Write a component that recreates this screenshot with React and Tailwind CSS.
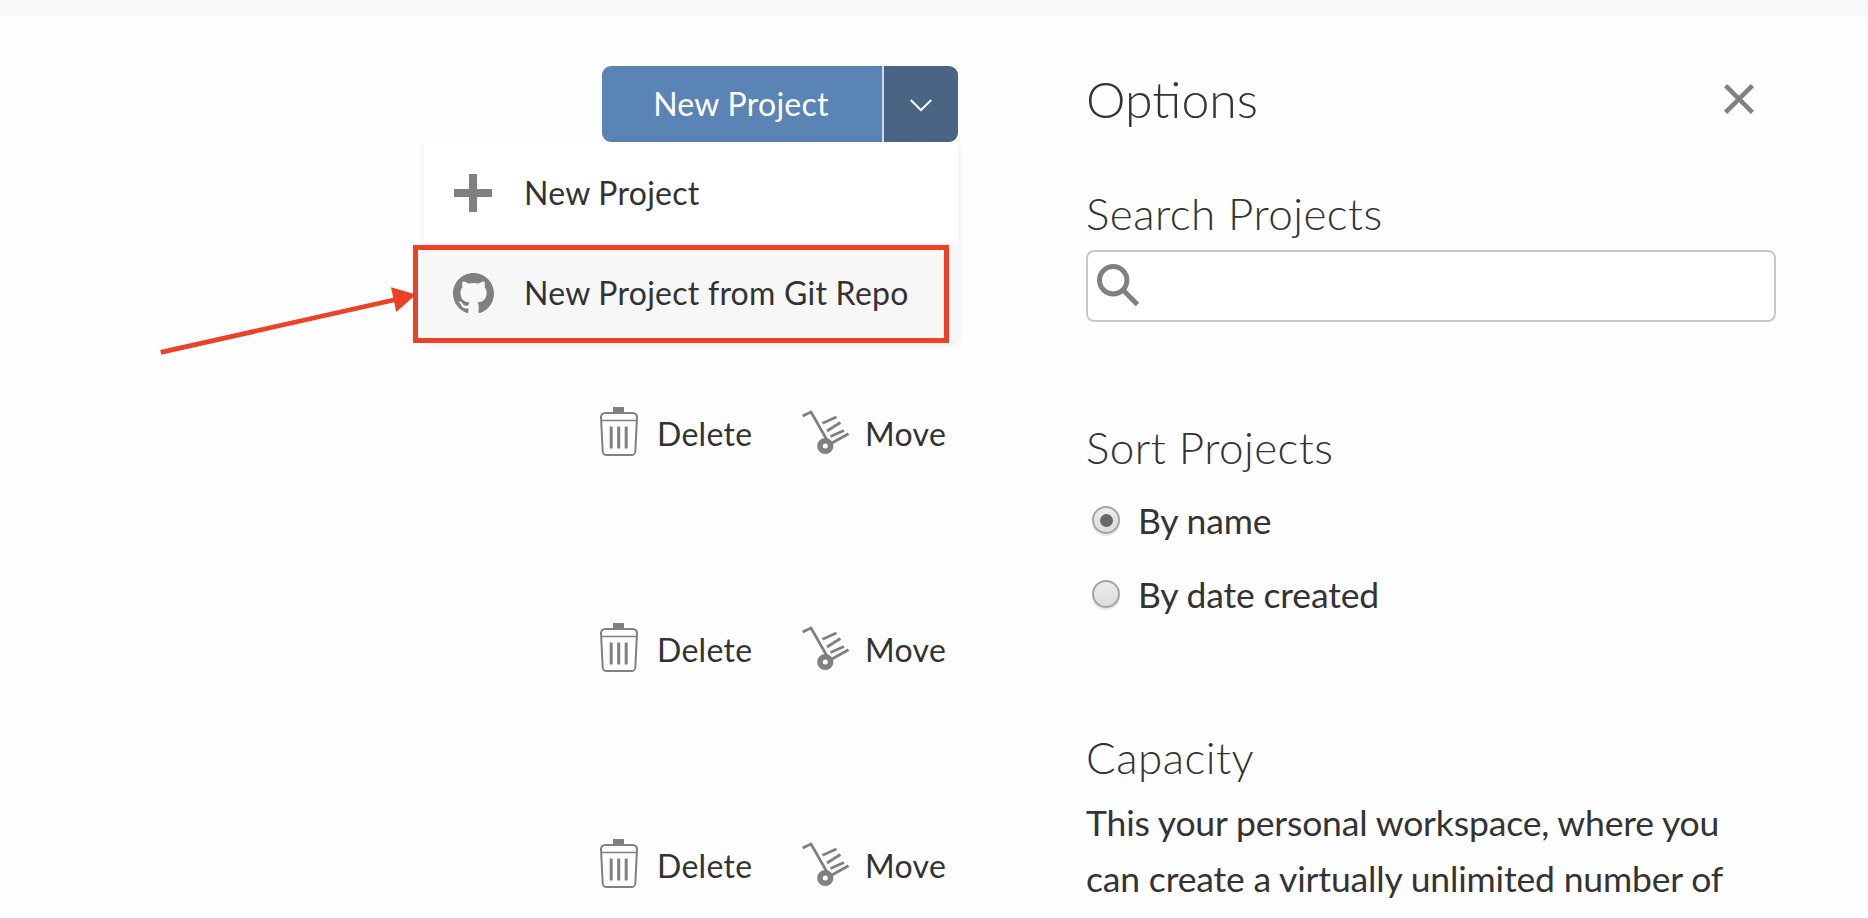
const ROWS = ["a", "b", "c"];

function GithubIcon() {
  return (
    <svg viewBox="0 0 16 16" className="h-[41px] w-[41px] fill-[#808080]">
      <path d="M8 0C3.58 0 0 3.58 0 8c0 3.54 2.29 6.53 5.47 7.59.4.07.55-.17.55-.38 0-.19-.01-.82-.01-1.49-2.01.37-2.53-.49-2.69-.94-.09-.23-.48-.94-.82-1.13-.28-.15-.68-.52-.01-.53.63-.01 1.08.58 1.23.82.72 1.21 1.87.87 2.33.66.07-.52.28-.87.51-1.07-1.78-.2-3.64-.89-3.64-3.95 0-.87.31-1.59.82-2.15-.08-.2-.36-1.02.08-2.12 0 0 .67-.21 2.2.82.64-.18 1.32-.27 2-.27.68 0 1.36.09 2 .27 1.53-1.04 2.2-.82 2.2-.82.44 1.1.16 1.92.08 2.12.51.56.82 1.27.82 2.15 0 3.07-1.87 3.75-3.65 3.95.29.25.54.73.54 1.48 0 1.07-.01 1.93-.01 2.2 0 .21.15.46.55.38A8.01 8.01 0 0 0 16 8c0-4.42-3.58-8-8-8z" />
    </svg>
  );
}

function PlusIcon() {
  return (
    <svg viewBox="0 0 38 38" className="h-[38px] w-[38px] fill-[#808080]">
      <path d="M15 0h8v15h15v8H23v15h-8V23H0v-8h15z" />
    </svg>
  );
}

function TrashIcon() {
  return (
    <svg viewBox="0 0 38 50" className="h-[50px] w-[38px] shrink-0" fill="none" stroke="#808080">
      <path d="M13 0h11v6H13z" fill="#808080" stroke="none" />
      <path d="M5 6h28a4 4 0 0 1 4 4.200l-1.700 34a4 4 0 0 1-4 3.800H6.700a4 4 0 0 1-4-3.800L1 10.200A4 4 0 0 1 5 6z" strokeWidth="2" />
      <path d="M1 13.500h36" strokeWidth="1.600" />
      <path d="M11.200 19.500v22M18.700 19.500v22M26.200 19.500v22" strokeWidth="3" />
    </svg>
  );
}

function MoveIcon() {
  return (
    <svg viewBox="0 0 48 46" className="h-[46px] w-[48px] shrink-0" fill="none" stroke="#808080" strokeWidth="2.800">
      <path d="M.7 6l8.300-4L25 30" />
      <path d="M20.500 13.200l14-6.200M25 21l13.500-8.500M28.500 26.500l13.500-6M29 33.500l17.500-9.700" />
      <circle cx="23.300" cy="36" r="5.300" strokeWidth="5.600" />
    </svg>
  );
}

function MenuItem({ icon, label, active }) {
  return (
    <div className={active ? "flex h-[100px] items-center bg-[#f7f7f7] pt-[2px] pl-7" : "flex h-[100px] items-center bg-white pt-[2px] pl-7"}>
      <span className="flex w-[42px] justify-center">{icon}</span>
      <span className="ml-[30px] text-[32px] leading-[40px] tracking-[0.25px]">{label}</span>
    </div>
  );
}

function Radio({ label, checked }) {
  return (
    <label className="flex h-[74px] items-center">
      <span className="ml-[6px] flex h-[28px] w-[28px] items-center justify-center rounded-full border-[2px] border-[#a6a6a6] bg-linear-to-b from-[#ececec] to-[#dcdcdc] shadow-[0_2px_1px_#e6e6e6]">
        {checked && <span className="h-[13px] w-[13px] rounded-full bg-[#666]" />}
      </span>
      <span className="ml-[18px] pt-[2px] text-[35.500px] leading-[44px] tracking-[-0.16px]">{label}</span>
    </label>
  );
}

export default function App() {
  return (
    <div className="relative flex h-[918px] w-[1868px] overflow-hidden bg-[#fefefe] font-['Lato',sans-serif] text-[#333]">
      <div className="absolute inset-x-0 top-0 h-[27px] bg-linear-to-b from-[#f7f7f7] to-[#fefefe]" />

      <main className="relative flex w-[958px] flex-col items-end pt-[66px]">
        <div className="relative flex h-[76px] w-[356px] shrink-0">
          <button className="w-[280px] rounded-l-[9px] bg-[#5a84b5] pr-[2px] text-[32px] leading-[40px] tracking-[0.27px] text-white">New Project</button>
          <span className="w-[2px] bg-[#cfdae6]" />
          <button className="flex w-[74px] items-center justify-center rounded-r-[9px] bg-[#496583]">
            <svg viewBox="0 0 22 13" className="mt-[3px] h-[13px] w-[22px]" fill="none" stroke="#fff" strokeWidth="2">
              <path d="M.8 1L11 11.200 21.200 1" />
            </svg>
          </button>
          <div className="absolute top-[76px] right-0 w-[534px] shadow-[0_2px_8px_rgba(0,0,0,0.08)]">
            <MenuItem icon={<PlusIcon />} label="New Project" />
            <MenuItem icon={<GithubIcon />} label="New Project from Git Repo" active />
          </div>
        </div>

        <div className="mt-[184px] flex w-[358px] shrink-0 flex-col">
          {ROWS.map((id) => (
            <div key={id} className="flex h-[216px] shrink-0 items-start pt-[81px]">
              <div className="flex items-start">
                <TrashIcon />
                <span className="ml-[19px] w-[99px] pt-[7px] text-[32px] leading-[40px] tracking-[0.3px]">Delete</span>
              </div>
              <div className="ml-[46px] flex items-start pt-[3px]">
                <MoveIcon />
                <span className="ml-[15px] pt-[4px] text-[32px] leading-[40px] tracking-[0.3px]">Move</span>
              </div>
            </div>
          ))}
        </div>
      </main>

      <aside className="ml-[128px] flex w-[690px] flex-col pt-[69px]">
        <div className="flex h-[60px] items-center justify-between">
          <h1 className="text-[50px] leading-[60px] font-light">Options</h1>
          <svg viewBox="0 0 30 30" className="mr-[22px] h-[30px] w-[30px]" fill="none" stroke="#808080" strokeWidth="4.500">
            <path d="M1.600 1.600l26.800 26.800M28.400 1.600L1.600 28.400" />
          </svg>
        </div>
        <h2 className="mt-[58px] text-[44px] leading-[52px] font-light tracking-[0.46px]">Search Projects</h2>
        <div className="mt-[11px] flex h-[72px] shrink-0 items-center rounded-[8px] border-2 border-[#c8c8c8] bg-white pb-[2px] pl-[9px]">
          <svg viewBox="0 0 42 42" className="h-[42px] w-[42px]" fill="none" stroke="#808080" strokeWidth="5">
            <circle cx="16.200" cy="16.200" r="13.700" />
            <path d="M26 26l14.500 14.500" />
          </svg>
        </div>
        <h2 className="mt-[99px] text-[44px] leading-[52px] font-light tracking-[0.46px]">Sort Projects</h2>
        <div className="mt-[10px] flex flex-col">
          <Radio label="By name" checked />
          <Radio label="By date created" />
        </div>
        <h2 className="mt-[100px] text-[44px] leading-[52px] font-light tracking-[0.46px]">Capacity</h2>
        <p className="mt-[12px] text-[35.500px] leading-[56px] tracking-[-0.16px] whitespace-nowrap">
          This your personal workspace, where you
          <br />
          can create a virtually unlimited number of
        </p>
      </aside>

      <div className="pointer-events-none absolute top-[245px] left-[413px] h-[98px] w-[536px] border-[5px] border-[#ec4127]" />
      <svg viewBox="0 0 260 70" className="pointer-events-none absolute top-[285px] left-[158px] h-[70px] w-[260px]">
        <path d="M2.800 67.300L238 14.500" stroke="#ec4127" strokeWidth="4.800" />
        <path d="M233 2.300L258 9.500 238.300 27z" fill="#ec4127" />
      </svg>
    </div>
  );
}
